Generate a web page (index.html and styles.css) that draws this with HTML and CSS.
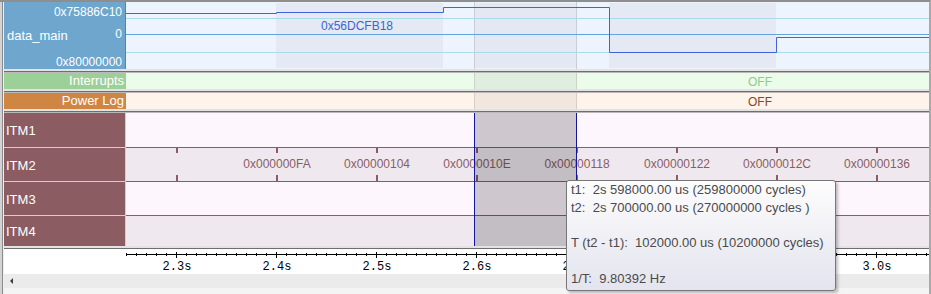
FILE: index.html
```html
<!DOCTYPE html>
<html lang="en">

<head>
    <meta charset="UTF-8">
    <meta name="viewport" content="width=device-width, initial-scale=1.0">
    <title>Trace View</title>
    <link rel="stylesheet" href="styles.css">
</head>

<body>
    <div class="scope">
        <div class="row row-data">
            <div class="label label-data">
                <div class="hex top">0x75886C10</div>
                <div class="mid"><span class="name">data_main</span><span class="hex">0</span></div>
                <div class="hex bottom">0x80000000</div>
            </div>
            <div class="track">
                <svg width="803" height="67">
                    <rect width="803" height="67" fill="#eef4fd"/>
                    <rect x="150" y="1" width="167" height="65" fill="#e4e9f3"/>
                    <rect x="348" y="1" width="103" height="65" fill="#e3e8f2"/>
                    <rect x="483" y="1" width="167" height="65" fill="#e4e9f3"/>
                    <path d="M348.5 0V67M450.5 0V67" stroke="#c9cdd5"/>
                    <path d="M0 16.5H803M0 50.5H803" stroke="#a9dbe9"/>
                    <path d="M0 32.5H803" stroke="#66a3da"/>
                    <path d="M0 11.5H150.5V10.5H317.5V5.5H483.5V50.5H650.5V35.5H803" stroke="#3f64d9" fill="none"/>
                    <text x="195" y="28" class="value">0x56DCFB18</text>
                </svg>
            </div>
        </div>
        <div class="sep"></div>
        <div class="row row-flag">
            <div class="label label-irq">Interrupts</div>
            <div class="track">
                <svg width="803" height="16">
                    <rect width="803" height="16" fill="#ecfceb"/>
                    <rect x="348" width="103" height="16" fill="#dfeedf"/>
                    <path d="M348.5 0V16M450.5 0V16" stroke="#cad2ca"/>
                    <text x="622" y="12.5" class="off off-irq">OFF</text>
                </svg>
            </div>
        </div>
        <div class="sep"></div>
        <div class="row row-flag">
            <div class="label label-power">Power Log</div>
            <div class="track">
                <svg width="803" height="16">
                    <rect width="803" height="16" fill="#fef4eb"/>
                    <rect x="348" width="103" height="16" fill="#f1e7de"/>
                    <path d="M348.5 0V16M450.5 0V16" stroke="#d8cfc8"/>
                    <text x="622" y="12.5" class="off off-power">OFF</text>
                </svg>
            </div>
        </div>
        <div class="sep"></div>
        <div class="itm">
            <div class="itm-labels">
                <div class="itm-label">ITM1</div>
                <div class="itm-label split">ITM2</div>
                <div class="itm-label split">ITM3</div>
                <div class="itm-label split last">ITM4</div>
            </div>
            <div class="itm-tracks">
                <div class="itm-track light"></div>
                <div class="itm-track dark split">
                    <svg width="803" height="33">
                        <defs>
                            <pattern id="itmTicks" width="100" height="33" patternUnits="userSpaceOnUse">
                                <rect x="50" y="0" width="2" height="5" fill="#8b5d63"/>
                                <rect x="50" y="27" width="2" height="6" fill="#8b5d63"/>
                            </pattern>
                        </defs>
                        <rect width="803" height="33" fill="url(#itmTicks)"/>
                        <g class="itm-values">
                            <text x="151" y="19.5">0x000000FA</text>
                            <text x="251" y="19.5">0x00000104</text>
                            <text x="351" y="19.5">0x0000010E</text>
                            <text x="451" y="19.5">0x00000118</text>
                            <text x="551" y="19.5">0x00000122</text>
                            <text x="651" y="19.5">0x0000012C</text>
                            <text x="751" y="19.5">0x00000136</text>
                        </g>
                    </svg>
                </div>
                <div class="itm-track light split"></div>
                <div class="itm-track dark split last"></div>
                <div class="selection"></div>
            </div>
        </div>
        <div class="sep sep-axis"></div>
        <div class="axis">
            <div class="axis-gap"></div>
            <svg width="803" height="25">
                <defs>
                    <pattern id="minorTicks" width="10" height="25" patternUnits="userSpaceOnUse">
                        <rect x="0" y="4" width="1" height="3" fill="#000"/>
                    </pattern>
                    <pattern id="majorTicks" width="100" height="25" patternUnits="userSpaceOnUse">
                        <rect x="50" y="3" width="1" height="6" fill="#000"/>
                    </pattern>
                </defs>
                <rect width="803" height="25" fill="url(#minorTicks)"/>
                <rect width="803" height="25" fill="url(#majorTicks)"/>
                <rect x="0" y="5" width="803" height="1" fill="#000"/>
                <g class="axis-labels">
                    <text x="51" y="21">2.3s</text>
                    <text x="151" y="21">2.4s</text>
                    <text x="251" y="21">2.5s</text>
                    <text x="351" y="21">2.6s</text>
                    <text x="451" y="21">2.7s</text>
                    <text x="551" y="21">2.8s</text>
                    <text x="651" y="21">2.9s</text>
                    <text x="751" y="21">3.0s</text>
                </g>
            </svg>
        </div>
        <div class="hscroll"><span class="arrow-left"></span></div>
        <div class="bottom-strip"></div>

        <div class="tooltip">
            <div class="tip-line">t1:  2s 598000.00 us (259800000 cycles)</div>
            <div class="tip-line">t2:  2s 700000.00 us (270000000 cycles )</div>
            <div class="tip-line"> </div>
            <div class="tip-line">T (t2 - t1):  102000.00 us (10200000 cycles)</div>
            <div class="tip-line"> </div>
            <div class="tip-line">1/T:  9.80392 Hz</div>
        </div>
    </div>
</body>

</html>
```

FILE: styles.css
```css
body {
    margin: 0;
    background: #fff;
    font-family: "Liberation Sans", Arial, sans-serif;
}

.scope {
    position: relative;
    width: 931px;
    height: 294px;
    box-sizing: border-box;
    border-top: 2px solid #8e8e8e;
    border-right: 2px solid #a9a9a9;
    padding-left: 4px;
    background: #f0f0f0;
    box-shadow: inset 2px 0 #d3d3d3, inset 3px 0 #8a8a8a;
    display: flex;
    flex-direction: column;
}

.row {
    display: flex;
    flex: none;
}

.row-data {
    height: 67px;
}

.row-flag {
    height: 16px;
}

.label {
    width: 122px;
    flex: none;
    box-sizing: border-box;
    color: #fff;
    font-size: 13px;
}

.track {
    width: 803px;
}

svg {
    display: block;
}

.label-data {
    background: #6ea6cd;
    border-right: 1px solid #4c85b7;
    display: flex;
    flex-direction: column;
    padding: 0 3px 0 3px;
}

.label-data .hex {
    font-size: 12px;
    line-height: 14px;
    text-align: right;
}

.label-data .top {
    margin-top: 3px;
}

.label-data .mid {
    display: flex;
    justify-content: space-between;
    margin-top: 8px;
    line-height: 14px;
}

.label-data .name {
    margin-top: 2px;
}

.label-data .bottom {
    margin-top: auto;
}

.value {
    font-family: "Liberation Sans", Arial, sans-serif;
    font-size: 12px;
    fill: #3c64d8;
}

.label-irq,
.label-power {
    text-align: right;
    padding-right: 2px;
    line-height: 16px;
}

.label-irq {
    background: #9dcf99;
}

.label-power {
    background: #cf8642;
}

.off {
    font-family: "Liberation Sans", Arial, sans-serif;
    font-size: 12px;
}

.off-irq {
    fill: #8fca8c;
}

.off-power {
    fill: #8b4513;
}

.sep {
    flex: none;
    height: 4px;
    background: linear-gradient(#e3e3e3 0 2px, #6e6e6e 2px 3px, #b9b9b9 3px);
}

.sep-axis {
    height: 3px;
    background: linear-gradient(#e3e3e3 0 2px, #6e6e6e 2px);
}

.itm {
    display: flex;
    flex: none;
}

.itm-labels {
    width: 122px;
    display: flex;
    flex-direction: column;
}

.itm-label {
    height: 34px;
    box-sizing: border-box;
    background: #8b5d63;
    border-right: 1px solid #d8cdce;
    color: #fff;
    font-size: 13px;
    display: flex;
    align-items: center;
    padding: 1px 0 0 2px;
}

.itm-label.split {
    border-top: 1px solid #d8cdce;
}

.itm-tracks {
    position: relative;
    width: 803px;
    display: flex;
    flex-direction: column;
}

.itm-track {
    height: 34px;
    box-sizing: border-box;
}

.itm-track.split {
    border-top: 1px solid #8b5d63;
}

.itm-label.last,
.itm-track.last {
    height: 31px;
}

.light {
    background: #fdf6fd;
}

.dark {
    background: #efe9ef;
}

.itm-values {
    font-family: "Liberation Sans", Arial, sans-serif;
    font-size: 12px;
    fill: #8b5d63;
    text-anchor: middle;
}

.selection {
    position: absolute;
    top: 0;
    bottom: 0;
    left: 348px;
    width: 103px;
    box-sizing: border-box;
    background: rgba(0, 0, 0, 0.185);
    border-left: 1px solid #14149c;
    border-right: 1px solid #14149c;
}

.axis {
    display: flex;
    flex: none;
    height: 25px;
    background: #fff;
}

.axis-gap {
    width: 122px;
}

.axis-labels {
    font-family: "Liberation Mono", "Courier New", monospace;
    font-size: 12px;
    fill: #000;
    text-anchor: middle;
}

.hscroll {
    flex: none;
    height: 14px;
    background: #ebebeb;
    display: flex;
    align-items: center;
    padding-left: 6px;
}

.arrow-left {
    width: 0;
    height: 0;
    border-top: 3px solid transparent;
    border-bottom: 3px solid transparent;
    border-right: 3px solid #3c3c3c;
}

.bottom-strip {
    flex: none;
    height: 6px;
    background: #f4f4f4;
}

.tooltip {
    position: absolute;
    left: 566px;
    top: 178px;
    width: 270px;
    height: 111px;
    box-sizing: border-box;
    border: 1px solid #777;
    border-radius: 3px;
    background: linear-gradient(#fdfdfd, #e3e4ee);
    box-shadow: 2px 2px 3px rgba(0, 0, 0, 0.25);
    padding: 0 4px;
    color: #4a4a4a;
    font-size: 13px;
    line-height: 17.8px;
}

.tip-line {
    white-space: pre;
    height: 17.8px;
}
```
